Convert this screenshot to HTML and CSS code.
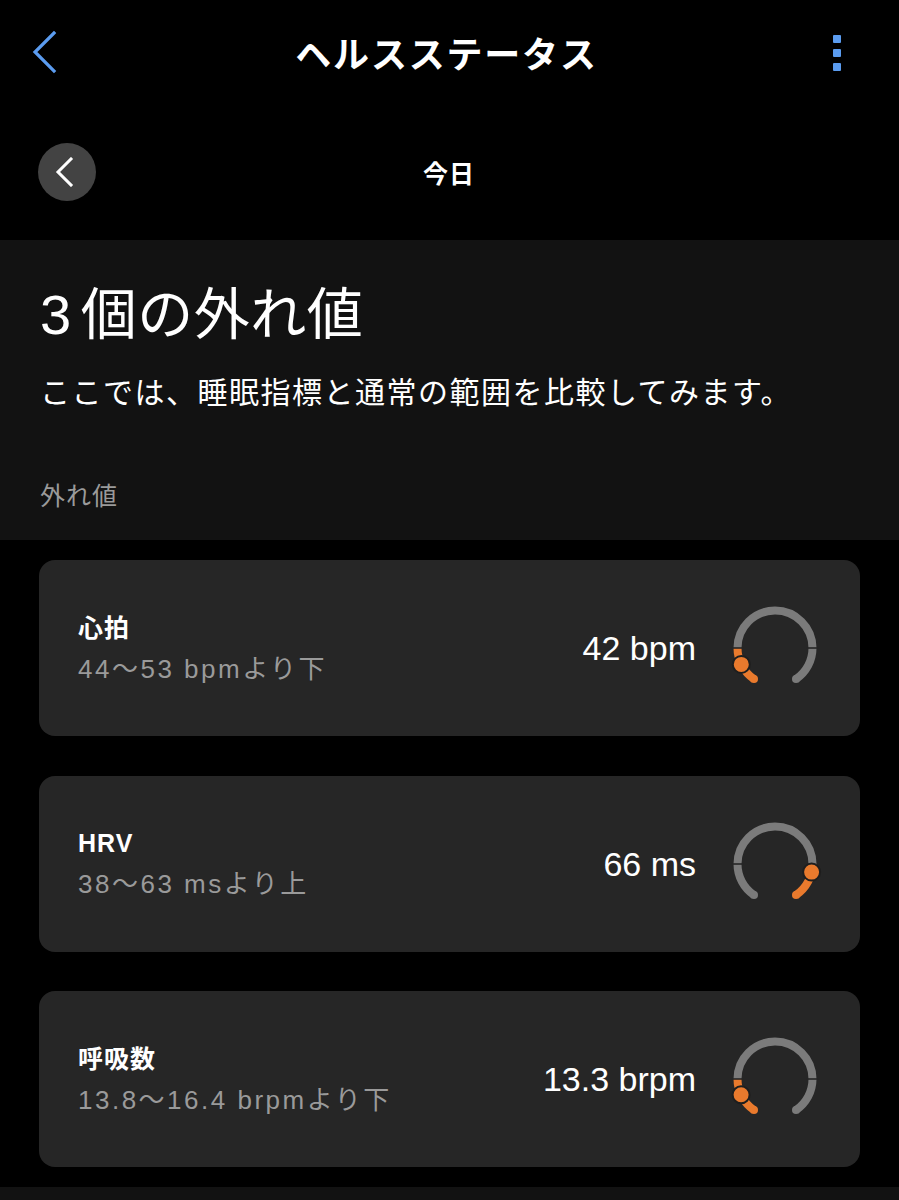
FILE: index.html
```html
<!DOCTYPE html>
<html lang="ja">
<head>
  <meta charset="UTF-8">
  <meta name="viewport" content="width=device-width, initial-scale=1.0">
  <title>ヘルスステータス</title>
  <link rel="stylesheet" href="styles.css">
</head>
<body>
  <header class="topbar">
    <svg class="back" width="30" height="44" viewBox="0 0 30 44">
      <path d="M24 3 L5 22 L24 41" fill="none" stroke="#5b9cf0" stroke-width="3.2" stroke-linecap="square"/>
    </svg>
    <h1>ヘルスステータス</h1>
    <div class="menu">
      <span></span><span></span><span></span>
    </div>
  </header>

  <nav class="daybar">
    <button class="prev" type="button">
      <svg width="20" height="30" viewBox="0 0 20 30">
        <path d="M16 2 L3 15 L16 28" fill="none" stroke="#fff" stroke-width="3" stroke-linecap="square"/>
      </svg>
    </button>
    <div class="day">今日</div>
  </nav>

  <section class="summary">
    <h2><span class="count">3</span>個の外れ値</h2>
    <p class="lead">ここでは、睡眠指標と通常の範囲を比較してみます。</p>
    <div class="label">外れ値</div>
  </section>

  <main class="cards">
    <div class="card">
      <div class="info">
        <div class="name">心拍</div>
        <div class="range">44～53 bpmより下</div>
      </div>
      <div class="value">42 bpm</div>
      <svg class="gauge" width="100" height="100" viewBox="0 0 100 100">
        <path d="M12.5 50 A37.5 37.5 0 0 1 87.5 50 A37.5 37.5 0 0 1 70.97 81.09" class="track"/>
        <circle cx="70.97" cy="81.09" r="4" class="track-end"/>
        <path d="M29.03 81.09 A37.5 37.5 0 0 1 12.5 50" class="hit"/>
        <circle cx="29.03" cy="81.09" r="4" class="hit-end"/>
        <line x1="6" y1="50" x2="19" y2="50" class="tick"/>
        <line x1="81" y1="50" x2="94" y2="50" class="tick"/>
        <circle cx="16.3" cy="66.4" r="8.5" class="dot"/>
      </svg>
    </div>

    <div class="card">
      <div class="info">
        <div class="name">HRV</div>
        <div class="range">38～63 msより上</div>
      </div>
      <div class="value">66 ms</div>
      <svg class="gauge" width="100" height="100" viewBox="0 0 100 100">
        <path d="M29.03 81.09 A37.5 37.5 0 0 1 12.5 50 A37.5 37.5 0 0 1 87.5 50" class="track"/>
        <circle cx="29.03" cy="81.09" r="4" class="track-end"/>
        <path d="M87.5 50 A37.5 37.5 0 0 1 70.97 81.09" class="hit"/>
        <circle cx="70.97" cy="81.09" r="4" class="hit-end"/>
        <line x1="6" y1="50" x2="19" y2="50" class="tick"/>
        <circle cx="86.6" cy="58.1" r="8.5" class="dot"/>
      </svg>
    </div>

    <div class="card">
      <div class="info">
        <div class="name">呼吸数</div>
        <div class="range">13.8～16.4 brpmより下</div>
      </div>
      <div class="value">13.3 brpm</div>
      <svg class="gauge" width="100" height="100" viewBox="0 0 100 100">
        <path d="M12.5 50 A37.5 37.5 0 0 1 87.5 50 A37.5 37.5 0 0 1 70.97 81.09" class="track"/>
        <circle cx="70.97" cy="81.09" r="4" class="track-end"/>
        <path d="M29.03 81.09 A37.5 37.5 0 0 1 12.5 50" class="hit"/>
        <circle cx="29.03" cy="81.09" r="4" class="hit-end"/>
        <line x1="6" y1="50" x2="19" y2="50" class="tick"/>
        <line x1="81" y1="50" x2="94" y2="50" class="tick"/>
        <circle cx="16.1" cy="65.8" r="8.5" class="dot"/>
      </svg>
    </div>
  </main>

  <div class="bottom-band"></div>
</body>
</html>
```

FILE: styles.css
```css
:root {
  --color-fondo: #000;
  --color-seccion: #121212;
  --color-tarjeta: #262626;
  --color-texto: #fff;
  --color-gris: #9a9a9a;
  --color-azul: #5b9cf0;
  --color-naranja: #e97a2d;
  --color-pista: #7b7b7b;
}

* {
  box-sizing: border-box;
}

body {
  margin: 0;
  background-color: var(--color-fondo);
  color: var(--color-texto);
  font-family: "Liberation Sans", "Noto Sans CJK JP", sans-serif;
}

.topbar {
  height: 104px;
  display: flex;
  align-items: center;
  justify-content: space-between;
  padding: 0 58px 0 30px;
}

.topbar h1 {
  margin: 0;
  font-family: "Noto Sans CJK JP", sans-serif;
  font-size: 36px;
  font-weight: 700;
  letter-spacing: 1.8px;
  line-height: 44px;
}

.back {
  display: block;
}

.menu {
  display: flex;
  flex-direction: column;
  gap: 6px;
  margin-top: 2px;
}

.menu span {
  width: 8px;
  height: 8px;
  border-radius: 1px;
  background-color: var(--color-azul);
}

.daybar {
  height: 136px;
  display: flex;
  align-items: center;
  padding-left: 38px;
}

.prev {
  width: 58px;
  height: 58px;
  border: none;
  border-radius: 50%;
  background-color: #434343;
  display: flex;
  align-items: center;
  justify-content: center;
  padding: 0 4px 0 0;
}

.day {
  flex: 1;
  text-align: center;
  margin-right: 97px;
  font-family: "Noto Sans CJK JP", sans-serif;
  font-size: 25px;
  font-weight: 700;
  letter-spacing: 1px;
}

.summary {
  background-color: var(--color-seccion);
  padding: 42px 40px 28px;
}

.summary h2 {
  margin: 0;
  font-size: 56px;
  font-weight: 400;
  line-height: 66px;
  letter-spacing: 0.5px;
}

.count {
  margin-right: 9px;
}

.lead {
  margin: 22px 0 0;
  font-family: "Noto Sans CJK JP", sans-serif;
  font-size: 30px;
  line-height: 40px;
  letter-spacing: 1.5px;
}

.label {
  margin-top: 66px;
  font-family: "Noto Sans CJK JP", sans-serif;
  font-size: 25px;
  line-height: 36px;
  letter-spacing: 1px;
  color: var(--color-gris);
}

.cards {
  display: flex;
  flex-direction: column;
  gap: 39.5px;
  padding: 20px 39px 20px;
}

.card {
  height: 176px;
  display: flex;
  align-items: center;
  background-color: var(--color-tarjeta);
  border-radius: 16px;
  padding: 0 35px 0 39px;
}

.info {
  flex: 1;
}

.name {
  font-size: 25px;
  font-weight: 700;
  line-height: 36px;
  letter-spacing: 1px;
}

.range {
  margin-top: 5px;
  font-size: 26px;
  line-height: 36px;
  letter-spacing: 2.5px;
  color: var(--color-gris);
}

.value {
  font-size: 34px;
  line-height: 40px;
  margin-right: 29px;
}

.gauge {
  display: block;
}

.track {
  fill: none;
  stroke: var(--color-pista);
  stroke-width: 8;
}

.track-end {
  fill: var(--color-pista);
}

.hit {
  fill: none;
  stroke: var(--color-naranja);
  stroke-width: 8;
}

.hit-end {
  fill: var(--color-naranja);
}

.tick {
  stroke: var(--color-tarjeta);
  stroke-width: 1.6;
}

.dot {
  fill: var(--color-naranja);
  stroke: #1e1e1e;
  stroke-width: 2;
}

.bottom-band {
  height: 40px;
  background-color: var(--color-seccion);
}
```
